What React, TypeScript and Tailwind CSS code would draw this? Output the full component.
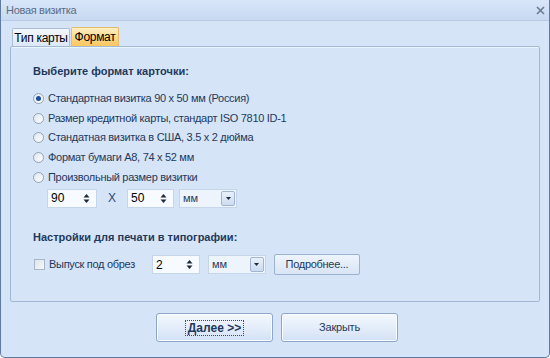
import React, { useState } from "react";

const font = "font-['Tahoma','Liberation_Sans',sans-serif]";

type SpinProps = { value: string; width: string };

const Spin: React.FC<SpinProps> = ({ value, width }) => (
  <div className={`flex h-[19px] ${width} items-center justify-between border border-[#c5d5ea] bg-[#f7faff] pl-[3px] pr-[6px]`}>
    <span className="text-[12px] leading-none text-black">{value}</span>
    <svg width="7" height="11" viewBox="0 0 7 11">
      <path d="M0.5 4.5 L3.5 1 L6.5 4.5 Z" fill="#1e2a3a" />
      <path d="M0.5 6.5 L3.5 10 L6.5 6.5 Z" fill="#1e2a3a" />
    </svg>
  </div>
);

type ComboProps = { value: string };

const Combo: React.FC<ComboProps> = ({ value }) => (
  <div className="flex h-[19px] w-[58px] items-center justify-between border border-[#c5d5ea] bg-[#eef4fc] pl-[3px] pr-[1px]">
    <span className="text-[11px] leading-none text-[#2a3e5e]">{value}</span>
    <div className="flex h-[15px] w-[14px] items-center justify-center rounded-[2px] border border-[#9fb5d3] bg-gradient-to-b from-[#e9f0fa] to-[#cddcf0]">
      <svg width="5" height="3" viewBox="0 0 5 3">
        <path d="M0 0 L5 0 L2.5 3 Z" fill="#1e2a3a" />
      </svg>
    </div>
  </div>
);

type RadioProps = { checked: boolean; label: string; onSelect: () => void };

const Radio: React.FC<RadioProps> = ({ checked, label, onSelect }) => (
  <div className="flex h-[19.6px] cursor-default items-center" onClick={onSelect}>
    <div className="flex h-[11px] w-[11px] items-center justify-center rounded-full border border-[#8fa3bd] bg-gradient-to-br from-[#dfe6ee] to-[#ffffff]">
      {checked && <div className="h-[5px] w-[5px] rounded-full bg-[#1b4f9c]" />}
    </div>
    <span className="ml-[4px] whitespace-nowrap text-[11px] leading-none tracking-[-0.3px] text-[#1e395b]">{label}</span>
  </div>
);

type DlgButtonProps = { children: React.ReactNode; focused?: boolean };

const DlgButton: React.FC<DlgButtonProps> = ({ children, focused }) => (
  <button
    type="button"
    className="flex h-[29px] w-[117px] items-center justify-center rounded-[3px] border border-[#8ea8cc] bg-gradient-to-b from-[#f4f8fe] via-[#e4edfa] to-[#d3e1f5] shadow-[inset_0_0_0_1px_#f8fbff]"
  >
    {focused ? (
      <span className="border border-dotted border-[#3a4a60] px-[2px] text-[12px] leading-[14px] font-bold text-[#1e395b]">
        {children}
      </span>
    ) : (
      <span className="text-[11px] leading-none tracking-[-0.2px] text-[#1e395b]">{children}</span>
    )}
  </button>
);

const formats = [
  "Стандартная визитка 90 x 50 мм (Россия)",
  "Размер кредитной карты, стандарт ISO 7810 ID-1",
  "Стандатная визитка в США, 3.5 x 2 дюйма",
  "Формат бумаги A8, 74 x 52 мм",
  "Произвольный размер визитки",
];

export default function App() {
  const [selected, setSelected] = useState(0);

  return (
    <div className={`${font} h-[358px] w-[550px] overflow-hidden bg-white`}>
      <div className="flex h-[358px] w-[550px] flex-col rounded-b-[5px] border-x border-b border-[#5f7aa3] bg-[#d6e4f7]">
        {/* title bar */}
        <div className="flex h-[21px] items-center justify-between border-b border-[#b9cbe4] bg-gradient-to-b from-[#d9e6f8] to-[#c7d9f2] pl-[5px] pr-[4px]">
          <span className="text-[11px] leading-none tracking-[-0.3px] text-[#5b6d86]">Новая визитка</span>
          <svg width="9" height="9" viewBox="0 0 9 9">
            <path d="M1 1 L8 8 M8 1 L1 8" stroke="#6b7a8f" strokeWidth="1.6" />
          </svg>
        </div>

        {/* tabs */}
        <div className="mt-[6px] flex h-[19px] items-end pl-[11px]">
          <div className="flex h-[18px] w-[58px] items-center justify-center rounded-t-[2px] border border-b-0 border-[#a9bdd8] bg-gradient-to-b from-[#f3f7fd] to-[#dde8f7]">
            <span className="whitespace-nowrap text-[12px] leading-none tracking-[-0.3px] text-black">Тип карты</span>
          </div>
          <div className="ml-[1px] flex h-[19px] w-[48px] items-center justify-center rounded-t-[2px] border border-b-0 border-[#e5bb6a] bg-gradient-to-b from-[#fff0c4] via-[#fdd98a] to-[#fbc660]">
            <span className="whitespace-nowrap text-[12px] leading-none tracking-[-0.3px] text-black">Формат</span>
          </div>
        </div>

        {/* panel */}
        <div className="mx-[9px] flex h-[256px] flex-col rounded-[2px] border border-[#a3b8d5] bg-[#d6e4f7] shadow-[inset_0_1px_0_#e9f7fc] pl-[22px] pt-[17px]">
          <div className="h-[14px] whitespace-nowrap text-[11px] leading-[14px] font-bold text-[#1e395b]">Выберите формат карточки:</div>

          <div className="mt-[11px] flex flex-col">
            {formats.map((f, i) => (
              <Radio key={f} label={f} checked={selected === i} onSelect={() => setSelected(i)} />
            ))}
          </div>

          <div className="mt-[2px] flex items-center pl-[14px]">
            <Spin value="90" width="w-[50px]" />
            <span className="ml-[11px] text-[12px] leading-none text-[#2a4a73]">X</span>
            <div className="ml-[11px]">
              <Spin value="50" width="w-[47px]" />
            </div>
            <div className="ml-[5px]">
              <Combo value="мм" />
            </div>
          </div>

          <div className="mt-[22px] h-[14px] whitespace-nowrap text-[11px] leading-[14px] font-bold text-[#1e395b]">
            Настройки для печати в типографии:
          </div>

          <div className="mt-[10px] flex h-[22px] items-center">
            <div className="ml-[1px] h-[11px] w-[11px] border border-[#a7b6c9] bg-gradient-to-br from-[#dfe5ec] to-[#f6f8fb]" />
            <span className="ml-[4px] whitespace-nowrap text-[11px] leading-none tracking-[-0.3px] text-[#1e395b]">Выпуск под обрез</span>
            <div className="ml-[17px]">
              <Spin value="2" width="w-[48px]" />
            </div>
            <div className="ml-[8px]">
              <Combo value="мм" />
            </div>
            <button
              type="button"
              className="ml-[8px] flex h-[21px] w-[86px] items-center justify-center rounded-[2px] border border-[#9bb2d2] bg-gradient-to-b from-[#eef4fc] to-[#d8e5f6]"
            >
              <span className="whitespace-nowrap text-[11px] leading-none tracking-[-0.3px] text-[#1e395b]">Подробнее...</span>
            </button>
          </div>
        </div>

        {/* footer */}
        <div className="mt-[11px] flex justify-center gap-[8px] pl-[4px]">
          <DlgButton focused>Далее &gt;&gt;</DlgButton>
          <DlgButton>Закрыть</DlgButton>
        </div>
      </div>
    </div>
  );
}
